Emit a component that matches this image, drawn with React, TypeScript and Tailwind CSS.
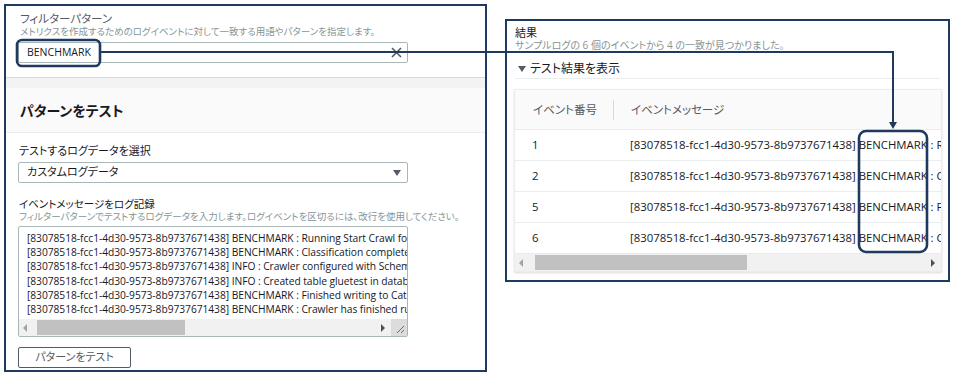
import React from "react"

const ID = "[83078518-fcc1-4d30-9573-8b9737671438]"

const logLines = [
  `${ID} BENCHMARK : Running Start Crawl for Crawler gluetest`,
  `${ID} BENCHMARK : Classification complete, writing results to database`,
  `${ID} INFO : Crawler configured with SchemaChangePolicy`,
  `${ID} INFO : Created table gluetest in database default`,
  `${ID} BENCHMARK : Finished writing to Catalog`,
  `${ID} BENCHMARK : Crawler has finished running and is in state READY`,
]

const results = [
  { no: "1", rest: " : Running Start Crawl for Crawler gluetest" },
  { no: "2", rest: " : Classification complete, writing results" },
  { no: "5", rest: " : Finished writing to Catalog" },
  { no: "6", rest: " : Crawler has finished running" },
]

function Scrollbar({ thumbLeft, thumbWidth, corner }: { thumbLeft: number; thumbWidth: number; corner?: boolean }) {
  return (
    <div className="flex h-[17px] bg-[#f1f1f1]">
      <div className="relative flex-1">
        <span className="absolute left-[4px] top-[5px] h-0 w-0 border-y-[4px] border-r-[4px] border-y-transparent border-r-[#a3a3a3]" />
        <div className="absolute top-[1px] h-[15px] bg-[#c1c1c1]" style={{ left: thumbLeft, width: thumbWidth }} />
        <span className="absolute right-[6px] top-[5px] h-0 w-0 border-y-[4px] border-l-[4px] border-y-transparent border-l-[#505050]" />
      </div>
      {corner && (
        <div className="relative w-[16px] bg-[#dcdcdc]">
          <svg width="16" height="17" className="absolute inset-0">
            <path d="M6 14 L13 7 M10 14 L13 11" stroke="#6b6b6b" strokeWidth="1" />
          </svg>
        </div>
      )}
    </div>
  )
}

export default function App() {
  return (
    <div className="relative flex items-start w-[954px] h-[374px] overflow-hidden bg-white text-[#16191f] font-['Open_Sans','Noto_Sans_CJK_JP',sans-serif] [font-feature-settings:'palt']">
      {/* left: filter pattern + test */}
      <div className="ml-[4px] mt-[4px] w-[483px] h-[368px] border-2 border-[#1e3a5f] flex flex-col overflow-hidden">
        <div className="h-[72px] px-[12px] pt-[5px] border-b border-[#d5dbdb]">
          <div className="pl-[2px] text-[11.5px] leading-[15px] text-[#545b64]">フィルターパターン</div>
          <div className="pl-[2px] text-[9.5px] leading-[12px] text-[#879596]">
            メトリクスを作成するためのログイベントに対して一致する用語やパターンを指定します。
          </div>
          <div className="mt-[4px] w-[390px] h-[21px] border border-[#aab7b8] rounded-[2px] flex items-center justify-between pl-[8px] pr-[5px]">
            <span className="text-[10.5px] text-[#16191f]">BENCHMARK</span>
            <svg width="11" height="11" viewBox="0 0 11 11">
              <path d="M1 1 L10 10 M10 1 L1 10" stroke="#545b64" strokeWidth="1.6" />
            </svg>
          </div>
        </div>
        <div className="h-[10px] bg-[#f2f3f3]" />
        <div className="h-[45px] bg-[#fafafa] border-b border-[#eaeded] flex items-center px-[14px]">
          <h2 className="text-[14px] font-bold text-[#16191f]">パターンをテスト</h2>
        </div>
        <div className="px-[12px] pt-[10px]">
          <div className="pl-[1px] text-[11px] leading-[15px] text-[#16191f]">テストするログデータを選択</div>
          <div className="mt-[4px] w-[390px] h-[21px] border border-[#aab7b8] rounded-[2px] flex items-center justify-between pl-[8px] pr-[6px]">
            <span className="text-[11px] text-[#16191f]">カスタムログデータ</span>
            <span className="h-0 w-0 border-x-[4px] border-t-[6px] border-x-transparent border-t-[#545b64]" />
          </div>
          <div className="mt-[15px] pl-[1px] text-[10.5px] leading-[13px] text-[#16191f]">イベントメッセージをログ記録</div>
          <div className="pl-[1px] text-[9.5px] leading-[12px] text-[#879596]">
            フィルターパターンでテストするログデータを入力します。ログイベントを区切るには、改行を使用してください。
          </div>
          <div className="mt-[3px] w-[390px] border border-[#aab7b8] rounded-[2px] flex flex-col overflow-hidden">
            <div className="h-[92px] pt-[4px] pl-[8px] overflow-hidden">
              {logLines.map((l, i) => (
                <div key={i} className="whitespace-nowrap text-[10.25px] leading-[14.2px] tracking-[-0.05px] text-[#16191f]">
                  {l}
                </div>
              ))}
            </div>
            <Scrollbar thumbLeft={18} thumbWidth={148} corner />
          </div>
          <button className="mt-[10px] w-[113px] h-[21px] border border-[#545b64] rounded-[2px] bg-white text-[11px] text-[#545b64] flex items-center justify-center">
            パターンをテスト
          </button>
        </div>
      </div>

      {/* right: results */}
      <div className="ml-[18px] mt-[19px] w-[445px] h-[263px] border-2 border-[#1e3a5f] flex flex-col overflow-hidden">
        <div className="pl-[8px] pt-[5px]">
          <div className="text-[11px] leading-[13px] text-[#16191f]">結果</div>
          <div className="text-[10px] leading-[12px] text-[#879596]">サンプルログの 6 個のイベントから 4 の一致が見つかりました。</div>
        </div>
        <div className="mx-[8px] mt-[10px] h-[18px] pb-[2px] border-b border-[#eaeded] flex items-center gap-[4px] pl-[3px]">
          <span className="h-0 w-0 border-x-[4px] border-t-[6px] border-x-transparent border-t-[#545b64]" />
          <span className="text-[12px] leading-[16px] text-[#16191f]">テスト結果を表示</span>
        </div>
        <div className="ml-[7px] mr-[6px] mt-[10px] border border-[#eaeded] shadow-[0_1px_2px_rgba(0,0,0,0.15)] overflow-hidden">
          <div className="h-[40px] bg-[#fafafa] border-b border-[#eaeded] flex items-center">
            <div className="w-[99px] pl-[18px] text-[11.5px] text-[#545b64] border-r border-[#d5dbdb] leading-[20px]">イベント番号</div>
            <div className="pl-[17px] text-[11.5px] text-[#545b64]">イベントメッセージ</div>
          </div>
          {results.map((r) => (
            <div key={r.no} className="h-[31px] border-b border-[#eaeded] flex items-center whitespace-nowrap text-[11.35px] text-[#16191f]">
              <div className="w-[115px] shrink-0 pl-[17px]">{r.no}</div>
              <div>
                {ID} BENCHMARK{r.rest}
              </div>
            </div>
          ))}
          <Scrollbar thumbLeft={20} thumbWidth={212} />
        </div>
      </div>

      {/* annotation overlay */}
      <svg className="absolute inset-0 pointer-events-none" width="954" height="374">
        <rect x="17" y="40" width="83" height="26" rx="5" fill="none" stroke="#1e3a5f" strokeWidth="2.6" />
        <rect x="859" y="131" width="68" height="121" rx="7" fill="none" stroke="#1e3a5f" strokeWidth="2.6" />
        <path d="M100 52 H893 V123" fill="none" stroke="#1e3a5f" strokeWidth="2" />
        <polygon points="889,122 897,122 893,129" fill="#1e3a5f" />
      </svg>
    </div>
  )
}
